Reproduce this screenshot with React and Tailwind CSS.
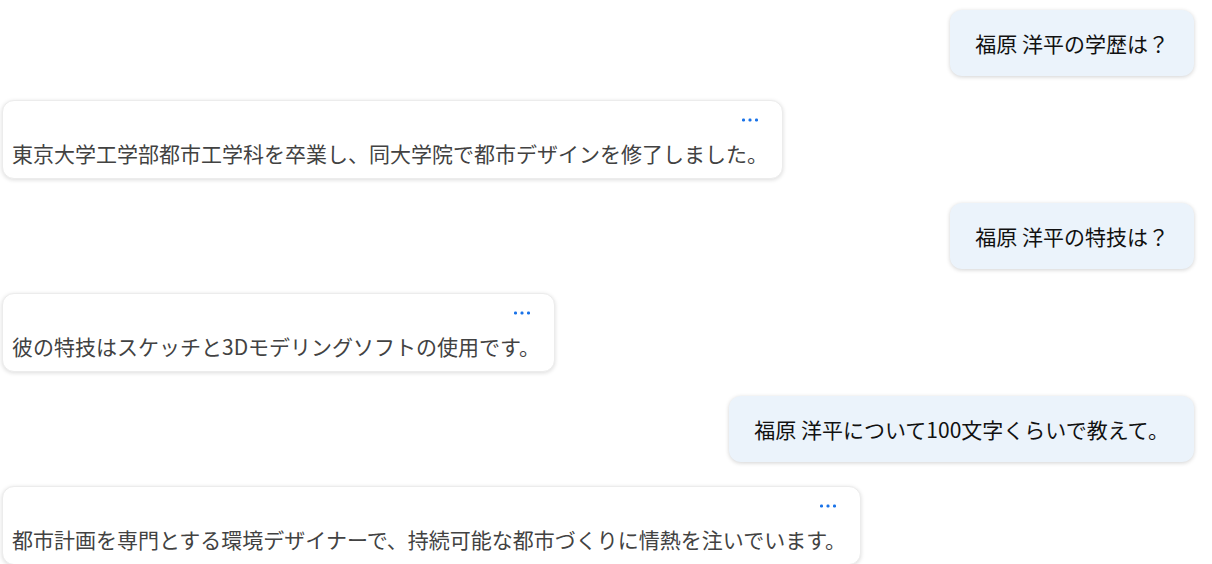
const messages = [
  { role: 'user', text: '福原 洋平の学歴は？' },
  { role: 'bot', text: '東京大学工学部都市工学科を卒業し、同大学院で都市デザインを修了しました。' },
  { role: 'user', text: '福原 洋平の特技は？' },
  { role: 'bot', text: '彼の特技はスケッチと3Dモデリングソフトの使用です。' },
  { role: 'user', text: '福原 洋平について100文字くらいで教えて。' },
  { role: 'bot', text: '都市計画を専門とする環境デザイナーで、持続可能な都市づくりに情熱を注いでいます。' },
];

function Dots() {
  return (
    <svg width="18" height="4" viewBox="0 0 18 4" className="block">
      <rect x="1" y="0.5" width="3" height="3" rx="1.2" fill="#1a73e8" />
      <rect x="7.5" y="0.5" width="3" height="3" rx="1.2" fill="#1a73e8" />
      <rect x="14" y="0.5" width="3" height="3" rx="1.2" fill="#1a73e8" />
    </svg>
  );
}

export default function App() {
  return (
    <div
      className="w-[1212px] h-[564px] overflow-hidden bg-white pt-[10px] pl-[2px] pr-[18px] flex flex-col gap-6"
      style={{ fontFamily: '"Noto Sans CJK JP", "Noto Sans", sans-serif' }}
    >
      {messages.map((m, i) =>
        m.role === 'user' ? (
          <div key={i} className="flex justify-end">
            <div className="bg-[#ebf3fb] rounded-xl px-[25px] py-5 text-[21px] leading-[26px] text-[#111] shadow-[0_1px_4px_rgba(0,0,0,0.18)] whitespace-nowrap">
              {m.text}
            </div>
          </div>
        ) : (
          <div key={i} className="flex justify-start">
            <div className="bg-white rounded-xl border border-[#ececec] pl-[9px] pr-[14px] pt-[7px] pb-[12px] shadow-[0_1px_4px_rgba(0,0,0,0.14)]">
              <div className="flex justify-end items-center h-6 pr-[9px]">
                <button className="p-0 flex items-center">
                  <Dots />
                </button>
              </div>
              <p className="mt-2 text-[21px] leading-[26px] text-[#424242] whitespace-nowrap">{m.text}</p>
            </div>
          </div>
        )
      )}
    </div>
  );
}
